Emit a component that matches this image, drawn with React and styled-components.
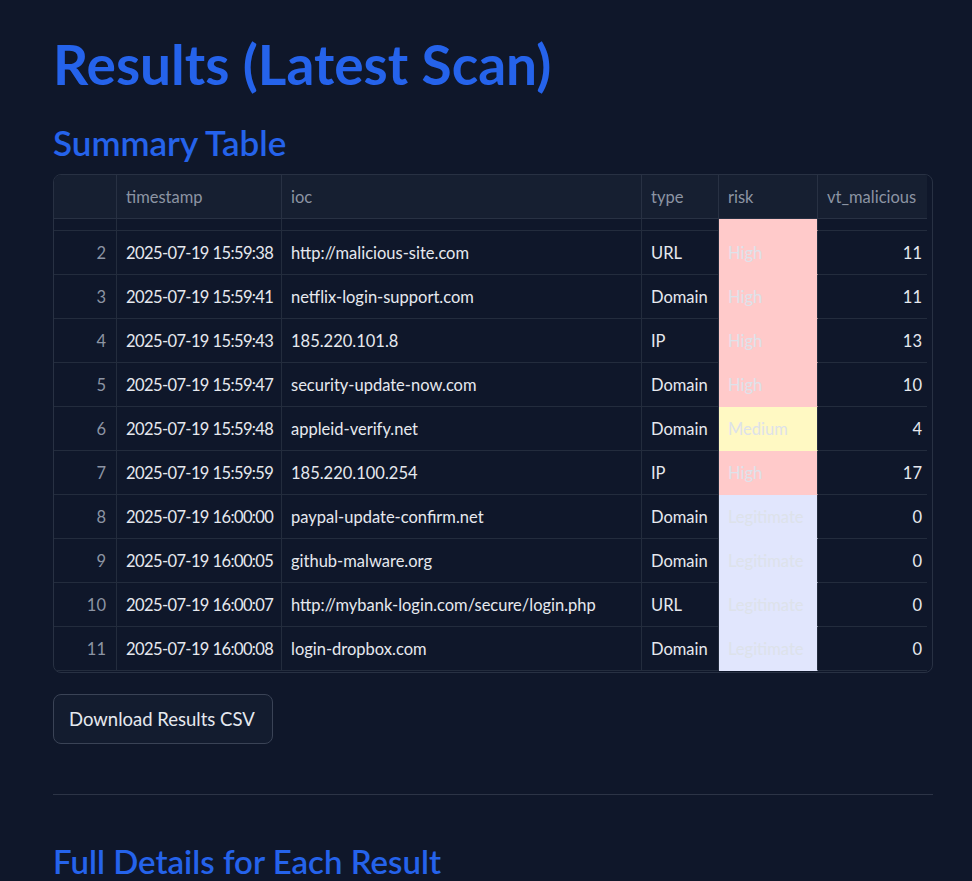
import styled, { createGlobalStyle } from 'styled-components';

const GlobalStyle = createGlobalStyle`
  body {
    margin: 0;
    background-color: #0f172a;
    font-family: Lato, "Noto Sans", sans-serif;
    color: #e6e9ef;
  }
`;

const Page = styled.main`
  width: 880px;
  padding: 34px 0 0 53px;
`;

const Title = styled.h1`
  margin: 0;
  font-size: 55px;
  line-height: 60px;
  font-weight: 700;
  color: #2563eb;
`;

const SectionTitle = styled.h2`
  margin: ${({ top }) => top}px 0 0;
  font-size: ${({ size }) => size}px;
  line-height: 40px;
  font-weight: 600;
  color: #2563eb;
`;

const TableFrame = styled.div`
  margin-top: 12px;
  height: 497px;
  border: 1px solid #283143;
  border-radius: 8px;
  overflow: hidden;
  font-size: 16.5px;
`;

const Grid = styled.div`
  width: 873px;
`;

const cols = '63px 165px 360px 77px 99px 109px';

const HeaderRow = styled.div`
  display: grid;
  grid-template-columns: ${cols};
  height: 44px;
  background-color: #161f31;
  border-bottom: 1px solid #283143;
  box-sizing: border-box;
`;

const HeaderCell = styled.div`
  display: flex;
  align-items: center;
  padding: 0 9px;
  border-right: 1px solid #283143;
  color: #8c94a3;
  white-space: nowrap;
  overflow: hidden;
  &:last-child {
    border-right: none;
  }
`;

const Row = styled.div`
  display: grid;
  grid-template-columns: ${cols};
  height: ${({ partial }) => (partial ? 12 : 44)}px;
`;

const Cell = styled.div`
  display: flex;
  align-items: center;
  justify-content: ${({ right }) => (right ? 'flex-end' : 'flex-start')};
  padding: 0 10px 0 9px;
  border-right: 1px solid #232c3d;
  border-bottom: 1px solid #232c3d;
  color: ${({ muted }) => (muted ? '#8c94a3' : '#e6e9ef')};
  white-space: nowrap;
  overflow: hidden;
  &:last-child {
    border-right: none;
    padding-right: 5px;
  }
`;

const TimeCell = styled(Cell)`
  letter-spacing: -0.6px;
`;

const riskColors = {
  High: '#ffcaca',
  Medium: '#fff9c3',
  Legitimate: '#e1e6fd',
};

const RiskCell = styled(Cell)`
  background-color: ${({ risk }) => riskColors[risk]};
  border-bottom-color: ${({ risk }) => riskColors[risk]};
  color: #dde2ea;
`;

const DownloadButton = styled.button`
  display: block;
  margin-top: 21px;
  height: 50px;
  padding: 0 17px 0 15px;
  font-family: inherit;
  font-size: 18.5px;
  color: #e6e9ef;
  background-color: #131c2f;
  border: 1px solid #3a4356;
  border-radius: 8px;
  cursor: pointer;
`;

const Divider = styled.hr`
  margin: 50px 0 0;
  border: none;
  border-top: 1px solid #2c3446;
`;

const rows = [
  [2, '2025-07-19 15:59:38', 'http://malicious-site.com', 'URL', 'High', 11],
  [3, '2025-07-19 15:59:41', 'netflix-login-support.com', 'Domain', 'High', 11],
  [4, '2025-07-19 15:59:43', '185.220.101.8', 'IP', 'High', 13],
  [5, '2025-07-19 15:59:47', 'security-update-now.com', 'Domain', 'High', 10],
  [6, '2025-07-19 15:59:48', 'appleid-verify.net', 'Domain', 'Medium', 4],
  [7, '2025-07-19 15:59:59', '185.220.100.254', 'IP', 'High', 17],
  [8, '2025-07-19 16:00:00', 'paypal-update-confirm.net', 'Domain', 'Legitimate', 0],
  [9, '2025-07-19 16:00:05', 'github-malware.org', 'Domain', 'Legitimate', 0],
  [10, '2025-07-19 16:00:07', 'http://mybank-login.com/secure/login.php', 'URL', 'Legitimate', 0],
  [11, '2025-07-19 16:00:08', 'login-dropbox.com', 'Domain', 'Legitimate', 0],
];

function App() {
  return (
    <>
      <GlobalStyle />
      <Page>
        <Title>Results (Latest Scan)</Title>
        <SectionTitle top={28} size={35}>Summary Table</SectionTitle>
        <TableFrame>
          <Grid>
            <HeaderRow>
              <HeaderCell />
              <HeaderCell>timestamp</HeaderCell>
              <HeaderCell>ioc</HeaderCell>
              <HeaderCell>type</HeaderCell>
              <HeaderCell>risk</HeaderCell>
              <HeaderCell>vt_malicious</HeaderCell>
            </HeaderRow>
            {/* first row is scrolled almost out of view */}
            <Row partial>
              <Cell />
              <Cell />
              <Cell />
              <Cell />
              <RiskCell risk="High" />
              <Cell />
            </Row>
            {rows.map(([idx, ts, ioc, type, risk, vt]) => (
              <Row key={idx}>
                <Cell right muted>{idx}</Cell>
                <TimeCell>{ts}</TimeCell>
                <Cell>{ioc}</Cell>
                <Cell>{type}</Cell>
                <RiskCell risk={risk}>{risk}</RiskCell>
                <Cell right>{vt}</Cell>
              </Row>
            ))}
          </Grid>
        </TableFrame>
        <DownloadButton type="button">Download Results CSV</DownloadButton>
        <Divider />
        <SectionTitle top={46} size={33}>Full Details for Each Result</SectionTitle>
      </Page>
    </>
  );
}

export default App;
